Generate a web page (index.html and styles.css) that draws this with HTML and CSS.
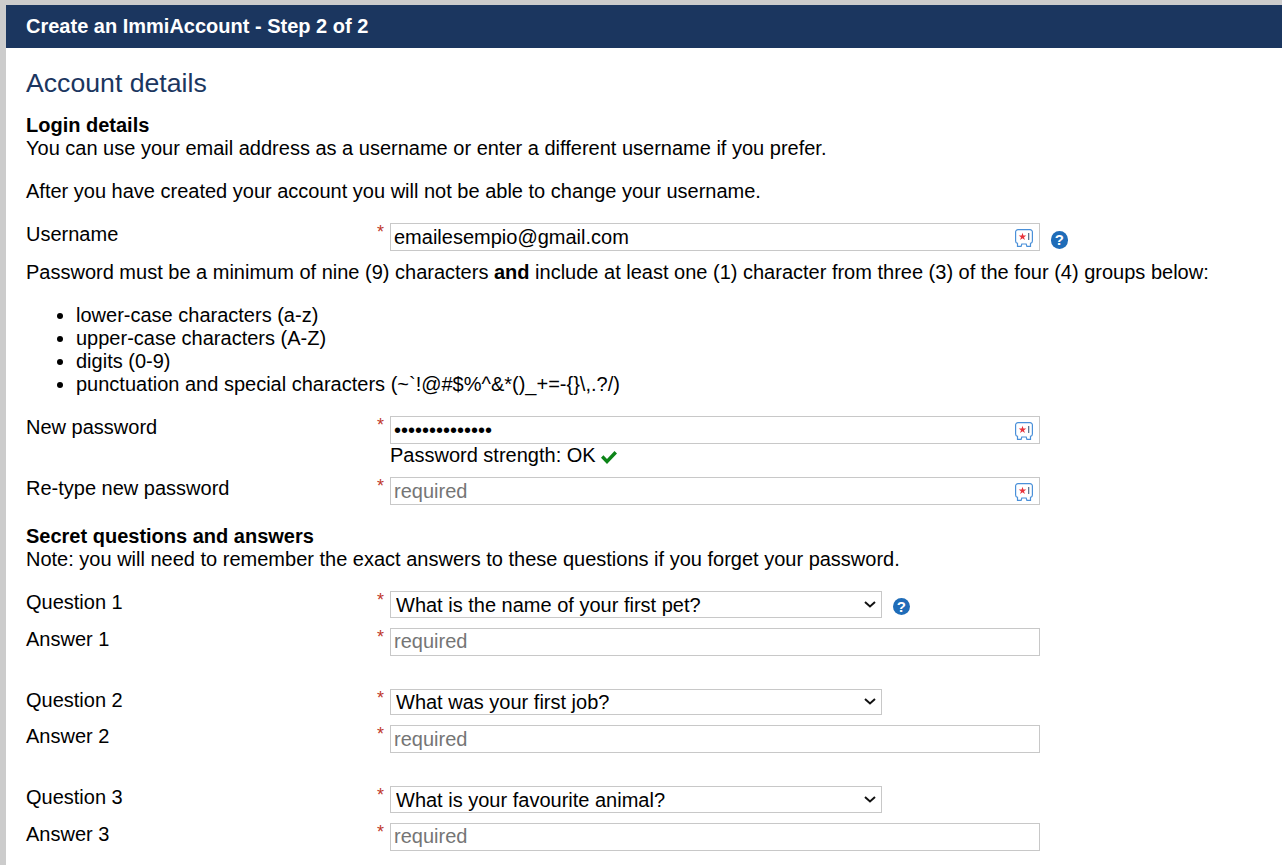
FILE: index.html
```html
<!DOCTYPE html>
<html lang="en">
<head>
<meta charset="utf-8">
<title>Create an ImmiAccount - Step 2 of 2</title>
<link rel="stylesheet" href="styles.css">
</head>
<body>
<svg class="defs" width="0" height="0" aria-hidden="true">
  <symbol id="key" viewBox="0 0 18 18">
    <path d="M3 .6h12a2.400 2.400 0 0 1 2.400 2.400v9a2.400 2.400 0 0 1-1.900 2.350V17.400h-3.600l-.7-2.400H6.800l-.7 2.400H2.500v-3.050A2.400 2.400 0 0 1 .6 12V3A2.400 2.400 0 0 1 3 .6z" fill="#fff" stroke="#4a90d9" stroke-width="1.200"/>
    <path d="M7.500 3.800l.9 2.700h2.900l-2.300 1.700.9 2.800-2.400-1.700-2.400 1.700.9-2.800-2.300-1.700h2.900z" fill="#e8343c"/>
    <rect x="13" y="4" width="1.300" height="7" fill="#5f7690"/>
  </symbol>
</svg>
<main class="panel">
  <header class="banner">Create an ImmiAccount - Step 2 of 2</header>
  <div class="content">
    <h1 class="title">Account details</h1>

    <p class="text"><strong>Login details</strong><br>You can use your email address as a username or enter a different username if you prefer.</p>
    <p class="text gap">After you have created your account you will not be able to change your username.</p>

    <div class="row gap">
      <label class="label" for="username">Username</label>
      <span class="req">*</span>
      <div class="field wide">
        <input class="input" id="username" type="text" value="emailesempio@gmail.com">
        <svg class="key"><use href="#key"/></svg>
      </div>
      <span class="help help-user">?</span>
    </div>

    <p class="text pw-rule">Password must be a minimum of nine (9) characters <strong>and</strong> include at least one (1) character from three (3) of the four (4) groups below:</p>
    <ul class="groups">
      <li>lower-case characters (a-z)</li>
      <li>upper-case characters (A-Z)</li>
      <li>digits (0-9)</li>
      <li>punctuation and special characters (~`!@#$%^&amp;*()_+=-{}\,.?/)</li>
    </ul>

    <div class="row gap">
      <label class="label" for="newpw">New password</label>
      <span class="req">*</span>
      <div class="field wide">
        <input class="input" id="newpw" type="password" value="emailesempio12">
        <svg class="key"><use href="#key"/></svg>
      </div>
    </div>
    <div class="strength">Password strength: OK
      <svg class="tick" viewBox="0 0 16 13"><path d="M0 6.800L2.400 4.300 6 7.900 13.500 0 16 2.500 6 13z" fill="#0c8418"/></svg>
    </div>
    <div class="row retype">
      <label class="label" for="retype">Re-type new password</label>
      <span class="req">*</span>
      <div class="field wide">
        <input class="input" id="retype" type="password" placeholder="required">
        <svg class="key"><use href="#key"/></svg>
      </div>
    </div>

    <p class="text secret"><strong>Secret questions and answers</strong><br>Note: you will need to remember the exact answers to these questions if you forget your password.</p>

    <div class="row q1">
      <label class="label" for="q1">Question 1</label>
      <span class="req">*</span>
      <select class="select" id="q1"><option>What is the name of your first pet?</option></select>
      <span class="help help-q">?</span>
    </div>
    <div class="row answer">
      <label class="label" for="a1">Answer 1</label>
      <span class="req">*</span>
      <div class="field wide"><input class="input" id="a1" type="text" placeholder="required"></div>
    </div>

    <div class="row qn">
      <label class="label" for="q2">Question 2</label>
      <span class="req">*</span>
      <select class="select" id="q2"><option>What was your first job?</option></select>
    </div>
    <div class="row answer">
      <label class="label" for="a2">Answer 2</label>
      <span class="req">*</span>
      <div class="field wide"><input class="input" id="a2" type="text" placeholder="required"></div>
    </div>

    <div class="row qn">
      <label class="label" for="q3">Question 3</label>
      <span class="req">*</span>
      <select class="select" id="q3"><option>What is your favourite animal?</option></select>
    </div>
    <div class="row answer">
      <label class="label" for="a3">Answer 3</label>
      <span class="req">*</span>
      <div class="field wide"><input class="input" id="a3" type="text" placeholder="required"></div>
    </div>
  </div>
</main>
</body>
</html>
```

FILE: styles.css
```css
html, body {
  margin: 0;
  height: 865px;
  overflow: hidden;
}
body {
  background: #cccccc;
  padding: 5px 0 0 6px;
  box-sizing: border-box;
  font-family: "Liberation Sans", Arial, sans-serif;
  font-size: 20px;
  line-height: 23px;
  color: #000;
}
.defs { position: absolute; }
.panel {
  background: #fff;
  height: 860px;
  overflow: hidden;
}
.banner {
  background: #1b365f;
  color: #fff;
  font-weight: 700;
  height: 43px;
  line-height: 42px;
  padding-left: 20px;
  font-size: 20px;
}
.content { padding: 0 20px; }
.title {
  margin: 18px 0 0;
  font-size: 26.67px;
  line-height: 34px;
  font-weight: 400;
  color: #1b365f;
  height: 48px;
}
.text { margin: 0; white-space: nowrap; }
.gap { margin-top: 20px; }
.row {
  display: flex;
  align-items: flex-start;
}
.label { width: 351px; flex: none; }
.req {
  width: 13px;
  flex: none;
  padding-top: 1px;
  color: #c0392b;
  font-size: 18px;
  line-height: 16px;
}
.field { position: relative; }
.wide { width: 650px; }
.input {
  display: block;
  box-sizing: border-box;
  width: 100%;
  height: 28px;
  margin: 0;
  padding: 1px 3px;
  border: 1px solid #c8c8c8;
  background: #fff;
  border-radius: 0;
  outline: none;
  font: 20px "Liberation Sans", Arial, sans-serif;
  color: #000;
}
.input::placeholder { color: #757575; opacity: 1; }
.key {
  position: absolute;
  top: 6px;
  right: 7px;
  width: 18px;
  height: 18px;
}
.select {
  display: block;
  box-sizing: border-box;
  width: 492px;
  height: 26.5px;
  margin: 0;
  padding: 1px 24px 0 5px;
  border: 1px solid #c8c8c8;
  border-radius: 0;
  appearance: none;
  background: #fff url("data:image/svg+xml,%3Csvg xmlns='http://www.w3.org/2000/svg' width='12' height='7' viewBox='0 0 12 7'%3E%3Cpath d='M1 1l5 4.500L11 1' fill='none' stroke='%23111' stroke-width='2'/%3E%3C/svg%3E") no-repeat right 5px center;
  outline: none;
  font: 20px "Liberation Sans", Arial, sans-serif;
  color: #000;
}
.help {
  flex: none;
  width: 17.5px;
  height: 17.5px;
  border-radius: 50%;
  background: #1f6cb8;
  color: #fff;
  font-weight: 700;
  font-size: 15px;
  line-height: 18px;
  text-align: center;
}
.help-user { margin: 8px 0 0 10.5px; }
.help-q { margin: 6.500px 0 0 10.5px; }
.pw-rule { margin-top: 10px; }
.groups {
  margin: 20px 0 0;
  padding: 0 0 0 50px;
}
.strength {
  margin-left: 364px;
  height: 23px;
  margin-top: 0;
}
.tick {
  width: 16px;
  height: 13px;
  vertical-align: -2px;
}
.retype { margin-top: 10px; }
.secret { margin-top: 20px; }
.q1 { margin-top: 20px; }
.answer { margin-top: 10px; }
.qn { margin-top: 33px; }
```
